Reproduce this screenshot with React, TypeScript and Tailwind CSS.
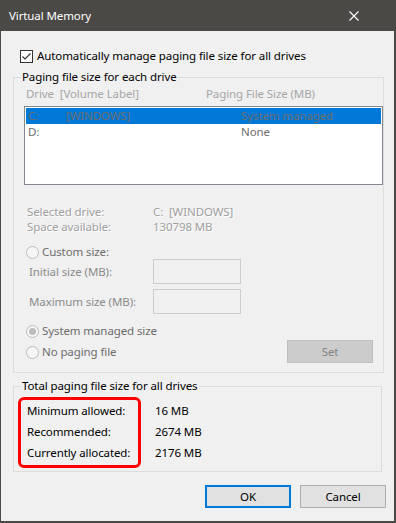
import React from "react";

const font = { fontFamily: '"Noto Sans", "Open Sans", sans-serif' };

function Radio({ checked }: { checked?: boolean }) {
  return (
    <span className="w-[13px] h-[13px] rounded-full border border-[#bcbcbc] bg-[#f6f6f6] flex items-center justify-center shrink-0">
      {checked && <span className="w-[7px] h-[7px] rounded-full bg-[#bcbcbc]" />}
    </span>
  );
}

export default function App() {
  return (
    <div
      className="w-[396px] h-[523px] bg-[#f0f0f0] border-l border-r-2 border-b-2 border-[#4a4946] flex flex-col text-[11.5px] tracking-[-0.1px] leading-[16px] text-black"
      style={font}
    >
      {/* title bar */}
      <div className="h-[31px] bg-[#4a4946] flex items-center justify-between pl-[8px] pr-[36px] -mx-[1px] shrink-0">
        <span className="text-white pl-[1px] text-[11.5px]">Virtual Memory</span>
        <svg width="10" height="10" viewBox="0 0 10 10" className="mt-[1px]">
          <path d="M0.5 0.5 L9.5 9.5 M9.5 0.5 L0.5 9.5" stroke="#ffffff" strokeWidth="1.1" />
        </svg>
      </div>

      <div className="flex flex-col px-[12px]">
        {/* checkbox */}
        <div className="flex items-center h-[16px] mt-[17px] pl-[7px]">
          <span className="w-[13px] h-[13px] border border-[#333333] bg-white flex items-center justify-center">
            <svg width="11" height="11" viewBox="0 0 11 11">
              <path d="M1.5 5.5 L4 8 L9.5 2.5" stroke="#333333" strokeWidth="1.2" fill="none" />
            </svg>
          </span>
          <span className="ml-[4px]">Automatically manage paging file size for all drives</span>
        </div>

        {/* group 1 */}
        <fieldset className="mt-[5px] border border-[#dcdcdc] w-[369px] pb-[9px]">
          <legend className="ml-[7px] px-[1px]">Paging file size for each drive</legend>
          <div className="flex h-[16px] mt-[1px] text-[#a6a6a6]">
            <span className="pl-[12px] w-[192px]">Drive&nbsp; [Volume Label]</span>
            <span>Paging File Size (MB)</span>
          </div>
          <div className="mt-[4px] ml-[10px] w-[359px] h-[79px] border border-[#828790] bg-white p-[1px] flex flex-col">
            <div className="h-[16px] bg-[#0078d7] flex text-[#6d6d6d]">
              <span className="pl-[2px] w-[40px]">C:</span>
              <span className="w-[175px]">[WINDOWS]</span>
              <span>System managed</span>
            </div>
            <div className="h-[16px] flex text-[#6d6d6d]">
              <span className="pl-[2px] w-[40px]">D:</span>
              <span className="w-[175px]"></span>
              <span>None</span>
            </div>
          </div>

          <div className="mt-[19px] flex flex-col text-[#a0a0a0] leading-[15px] [text-shadow:1px_1px_0_#ffffff]">
            <div className="flex h-[15px] items-center">
              <span className="pl-[13px] w-[139px]">Selected drive:</span>
              <span>C:&nbsp; [WINDOWS]</span>
            </div>
            <div className="flex h-[15px] items-center">
              <span className="pl-[13px] w-[139px]">Space available:</span>
              <span>130798 MB</span>
            </div>
          </div>

          <div className="mt-[11px] h-[14px] flex items-center pl-[12px] text-[#6d6d6d]">
            <Radio />
            <span className="ml-[3px]">Custom size:</span>
          </div>
          <div className="flex items-center h-[25px] text-[#8a8a8a]">
            <span className="pl-[15px] w-[139px]">Initial size (MB):</span>
            <span className="w-[88px] h-[25px] border border-[#cccccc] bg-[#f0f0f0]" />
          </div>
          <div className="flex items-center h-[25px] mt-[5px] text-[#8a8a8a]">
            <span className="pl-[15px] w-[139px]">Maximum size (MB):</span>
            <span className="w-[88px] h-[25px] border border-[#cccccc] bg-[#f0f0f0]" />
          </div>

          <div className="mt-[9px] flex items-start">
            <div className="flex flex-col pl-[12px] w-[273px] text-[#6d6d6d]">
              <div className="h-[16px] flex items-center">
                <Radio checked />
                <span className="ml-[3px]">System managed size</span>
              </div>
              <div className="h-[16px] mt-[5px] flex items-center">
                <Radio />
                <span className="ml-[3px]">No paging file</span>
              </div>
            </div>
            <div className="mt-[17px] w-[86px] h-[23px] border border-[#bfbfbf] bg-[#cccccc] flex items-center justify-center text-[#838383]">
              Set
            </div>
          </div>
        </fieldset>

        {/* group 2 */}
        <fieldset className="mt-[5px] border border-[#dcdcdc] w-[369px] pb-[3px]">
          <legend className="ml-[7px] px-[1px]">Total paging file size for all drives</legend>
          <div className="mt-[3px] flex">
            <div className="ml-[4px] w-[123px] h-[71px] border-[3px] border-[#ff0000] rounded-[6px] flex flex-col pl-[6px]">
              <div className="h-[21px] flex items-center">Minimum allowed:</div>
              <div className="h-[21px] flex items-center">Recommended:</div>
              <div className="h-[21px] flex items-center">Currently allocated:</div>
            </div>
            <div className="ml-[14px] flex flex-col pt-[3px]">
              <div className="h-[21px] flex items-center">16 MB</div>
              <div className="h-[21px] flex items-center">2674 MB</div>
              <div className="h-[21px] flex items-center">2176 MB</div>
            </div>
          </div>
        </fieldset>

        {/* buttons */}
        <div className="mt-[13px] flex justify-end gap-[9px] mr-[-4px]">
          <div className="w-[86px] h-[23px] border-2 border-[#0078d7] bg-[#e1e1e1] flex items-center justify-center">
            OK
          </div>
          <div className="w-[86px] h-[23px] border border-[#adadad] bg-[#e1e1e1] flex items-center justify-center">
            Cancel
          </div>
        </div>
      </div>
    </div>
  );
}
